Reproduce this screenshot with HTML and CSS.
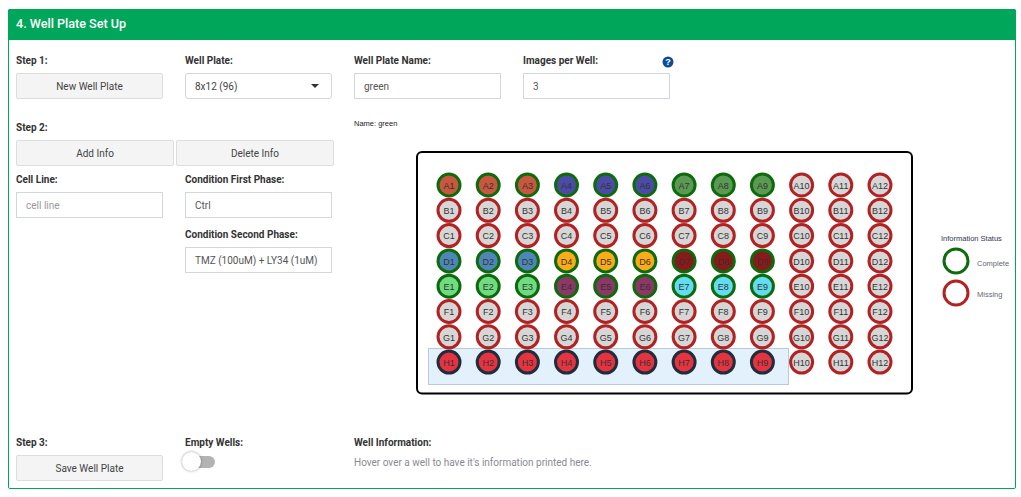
FILE: index.html
```html
<!DOCTYPE html>
<html lang="en">
<head>
<meta charset="utf-8">
<title>Well Plate Set Up</title>
<link rel="stylesheet" href="styles.css">
</head>
<body>
<section class="panel">
  <h2 class="panel-title">4. Well Plate Set Up</h2>
  <div class="panel-body">
    <div class="row row-top">
      <div class="field">
        <label class="label">Step 1:</label>
        <button class="btn">New Well Plate</button>
      </div>
      <div class="field">
        <label class="label">Well Plate:</label>
        <div class="select">8x12 (96)<span class="caret"></span></div>
      </div>
      <div class="field">
        <label class="label">Well Plate Name:</label>
        <input class="input" value="green">
      </div>
      <div class="field field-help">
        <label class="label">Images per Well:</label>
        <input class="input" value="3">
        <svg class="help" viewBox="0 0 12 12" width="12" height="12"><circle cx="6" cy="6" r="5.5" fill="#0f4c97"/><text x="6" y="9.2" class="help-mark">?</text></svg>
      </div>
    </div>
    <div class="middle">
      <div class="side">
        <label class="label">Step 2:</label>
        <div class="btn-pair">
          <button class="btn">Add Info</button>
          <button class="btn">Delete Info</button>
        </div>
        <div class="info-grid">
          <div class="field">
            <label class="label">Cell Line:</label>
            <input class="input" placeholder="cell line">
          </div>
          <div class="stack">
            <div class="field">
              <label class="label">Condition First Phase:</label>
              <input class="input" value="Ctrl">
            </div>
            <div class="field">
              <label class="label">Condition Second Phase:</label>
              <input class="input" value="TMZ (100uM) + LY34 (1uM)">
            </div>
          </div>
        </div>
      </div>
      <svg id="plate" class="plate" viewBox="354 115 654 285" width="654" height="285"></svg>
    </div>
    <div class="row row-bottom">
      <div class="field">
        <label class="label">Step 3:</label>
        <button class="btn">Save Well Plate</button>
      </div>
      <div class="field">
        <label class="label">Empty Wells:</label>
        <div class="switch"><span class="knob"></span></div>
      </div>
      <div class="field field-wide">
        <label class="label">Well Information:</label>
        <p class="hint">Hover over a well to have it's information printed here.</p>
      </div>
    </div>
  </div>
</section>
<script src="plate.js"></script>
</body>
</html>
```
FILE: styles.css
```css
* { box-sizing: border-box; }
html, body { margin: 0; padding: 0; background: #fff; }
body {
  padding: 9px 5px 0 8px;
  font-family: Roboto, "Noto Sans", sans-serif;
  font-size: 10px;
  color: #444;
  height: 497px;
  overflow: hidden;
}
.panel {
  width: 1008px;
  height: 480px;
  border: 1px solid #00a65a;
  border-radius: 2px;
  display: flex;
  flex-direction: column;
}
.panel-title {
  margin: -1px -1px 0;
  height: 31px;
  background: #00a65a;
  color: #fff;
  font-size: 12.6px;
  font-weight: 500;
  line-height: 29px;
  padding-left: 8px;
  border-radius: 2px 2px 0 0;
}
.panel-body {
  padding: 14px 7px 0;
  display: flex;
  flex-direction: column;
  flex: 1;
}
.row { display: grid; grid-template-columns: repeat(4, 147px); column-gap: 22px; }
.field { display: flex; flex-direction: column; position: relative; min-width: 0; }
.label {
  display: block;
  font-weight: 700;
  font-size: 10px;
  color: #333;
  line-height: 14px;
  margin-bottom: 5px;
}
.btn {
  height: 26px;
  width: 100%;
  border: 1px solid #ddd;
  border-radius: 2px;
  background: #f4f4f4;
  font: inherit;
  color: #444;
  padding: 0;
}
.select {
  height: 26px;
  border: 1px solid #d2d6de;
  border-radius: 3px;
  padding: 0 9px;
  line-height: 25px;
  position: relative;
  color: #444;
}
.caret {
  position: absolute;
  right: 12px;
  top: 10px;
  border-left: 4px solid transparent;
  border-right: 4px solid transparent;
  border-top: 4px solid #333;
}
.input {
  height: 26px;
  width: 100%;
  border: 1px solid #d2d6de;
  padding: 0 9px;
  font: inherit;
  color: #555;
  background: #fff;
  outline: none;
}
.input::placeholder { color: #999; opacity: 1; }
.help { position: absolute; left: 139px; top: 2px; }
.help-mark { fill: #fff; font: 700 9px "Liberation Sans", sans-serif; text-anchor: middle; }
.middle { display: flex; margin-top: 22px; height: 315px; }
.side { width: 338px; flex: none; }
.btn-pair { display: grid; grid-template-columns: 158px 158px; column-gap: 2px; margin-top: 1px; }
.info-grid { display: grid; grid-template-columns: 147px 147px; column-gap: 22px; margin-top: 7px; }
.stack { display: flex; flex-direction: column; gap: 10px; }
.plate { display: block; margin-top: -6px; overflow: visible; flex: none; }
.row-bottom { grid-template-columns: 147px 147px 1fr; }
.switch { width: 30px; height: 12px; border-radius: 6px; background: #b3b3b3; position: relative; margin-top: 1px; }
.knob {
  position: absolute;
  left: -3px;
  top: -4px;
  width: 19px;
  height: 19px;
  border-radius: 50%;
  background: #fff;
  box-shadow: 0 0 3px rgba(0,0,0,.4);
}
.hint { margin: 1px 0 0; color: #8a8a92; line-height: 14px; }

.plate-box { fill: #fff; stroke: #000; stroke-width: 2; }
.brush { fill: #e3f1fd; stroke: #b9c9dc; stroke-width: 1; }
.well { stroke-width: 3; }
.well-ok { stroke: #0d6b0d; }
.well-miss { stroke: #b22222; fill: #d6d6d6; }
.well-sel { stroke: #1f2d3d; fill: #e63340; }
.well-label { font: 9px "Liberation Sans", sans-serif; text-anchor: middle; fill: #333; }
.name { font: 7.5px "Liberation Sans", sans-serif; fill: #222; }
.lg-title { font: 7.5px "Liberation Sans", sans-serif; fill: #335; }
.lg-text { font: 7.5px "Liberation Sans", sans-serif; fill: #667; }
.lg-ring { fill: #fff; stroke-width: 3; }
.well-miss.lg-ring { fill: #fff; }
```
FILE: plate.js
```js
var NS = "http://www.w3.org/2000/svg";
var svg = document.getElementById("plate");
function add(tag, attrs, text) {
  var el = document.createElementNS(NS, tag);
  for (var k in attrs) el.setAttribute(k, attrs[k]);
  if (text) el.textContent = text;
  svg.appendChild(el);
  return el;
}
add("text", { x: 354, y: 125.5, "class": "name" }, "Name: green");
add("rect", { x: 417, y: 152, width: 495, height: 241.5, rx: 5, "class": "plate-box" });
add("rect", { x: 428.5, y: 348.5, width: 360, height: 36, "class": "brush" });
var rows = "ABCDEFGH";
var fills = {
  A: ["#c8573f","#c8573f","#c8573f","#4b4ba6","#4b4ba6","#4b4ba6","#5a9a52","#5a9a52","#5a9a52"],
  D: ["#4f86b8","#4f86b8","#4f86b8","#fbab18","#fbab18","#fbab18","#8a1a1a","#8a1a1a","#8a1a1a"],
  E: ["#6fdc80","#6fdc80","#6fdc80","#8c3766","#8c3766","#8c3766","#62dcf0","#62dcf0","#62dcf0"]
};
for (var r = 0; r < 8; r++) {
  for (var c = 0; c < 12; c++) {
    var x = 449 + c * 39.18;
    var y = 185 + r * 25.3;
    var row = rows[r];
    var cls, fill = null;
    if (c < 9 && fills[row]) { cls = "well well-ok"; fill = fills[row][c]; }
    else if (c < 9 && row === "H") { cls = "well well-sel"; }
    else { cls = "well well-miss"; }
    var attrs = { cx: x.toFixed(1), cy: y.toFixed(1), r: 11, "class": cls };
    if (fill) attrs.fill = fill;
    add("circle", attrs);
    add("text", { x: x.toFixed(1), y: (y + 3.7).toFixed(1), "class": "well-label" }, row + (c + 1));
  }
}
add("text", { x: 941, y: 240.5, "class": "lg-title" }, "Information Status");
add("circle", { cx: 956, cy: 261, r: 12, "class": "lg-ring well-ok" });
add("circle", { cx: 956, cy: 293, r: 12, "class": "lg-ring well-miss" });
add("text", { x: 977, y: 265.5, "class": "lg-text" }, "Complete");
add("text", { x: 977, y: 297, "class": "lg-text" }, "Missing");
```
